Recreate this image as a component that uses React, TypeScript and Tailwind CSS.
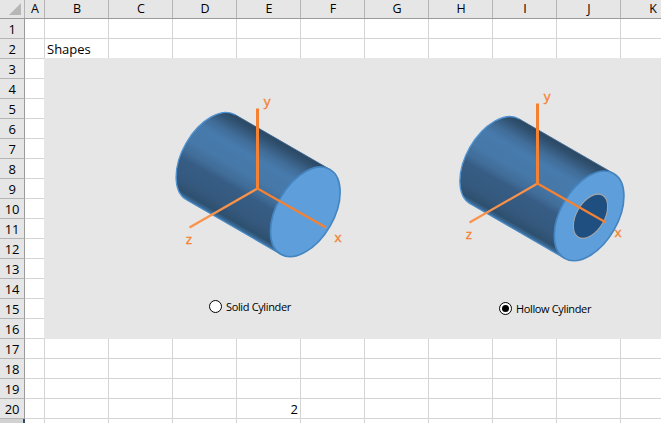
import { useState } from "react";
import clsx from "clsx";

type Shape = "solid" | "hollow";

const COLUMNS = ["A", "B", "C", "D", "E", "F", "G", "H", "I", "J", "K"];
const ROWS = Array.from({ length: 21 }, (_, i) => i + 1);

function columnWidth(column: string) {
  return column === "A" ? "w-5" : "w-16";
}

function ColumnHeaders() {
  return (
    <div className="flex h-[19px] border-b border-[#9b9b9b] bg-[#e6e6e6]">
      <div className="flex w-[25px] shrink-0 justify-end border-r border-[#b5b5b5] pt-[3px] pr-[3px]">
        <svg className="h-3 w-3" viewBox="0 0 12 12">
          <path d="M12 0V12H0Z" fill="#b7b7b7" />
        </svg>
      </div>
      {COLUMNS.map((column) => (
        <div
          key={column}
          className={clsx(
            "shrink-0 border-r border-[#b5b5b5] pl-px text-center text-[12.5px] leading-[17px]",
            columnWidth(column)
          )}
        >
          {column}
        </div>
      ))}
    </div>
  );
}

function Row({ row, cells }: { row: number; cells: Record<string, string> }) {
  return (
    <div className="flex h-5 leading-5">
      <div
        className={clsx(
          "w-[25px] shrink-0 border-b text-center tracking-[-0.3px]",
          row === 21
            ? "border-r-2 border-b-[#b5b5b5] border-r-[#2f4d6b] bg-[#d2d2d2]"
            : "border-r border-r-[#9b9b9b] border-b-[#b5b5b5] bg-[#e6e6e6]"
        )}
      >
        {row === 21 ? null : row}
      </div>
      {COLUMNS.map((column) => {
        const value = cells[`${column}${row}`] ?? "";
        const isNumber = value !== "" && !Number.isNaN(Number(value));
        return (
          <div
            key={column}
            className={clsx(
              "shrink-0 border-r border-b border-[#d4d4d4] px-0.5",
              columnWidth(column),
              isNumber && "text-right"
            )}
          >
            {value}
          </div>
        );
      })}
    </div>
  );
}

function Cylinder({ kind }: { kind: Shape }) {
  const hollow = kind === "hollow";
  const shade = `shade-${kind}`;

  return (
    <svg className="h-[180px] w-[200px]" viewBox="0 0 200 180">
      <defs>
        <linearGradient id={shade} gradientUnits="userSpaceOnUse" x1="0" y1="-49" x2="0" y2="49">
          <stop offset="0" stopColor="#2b4862" />
          <stop offset="0.05" stopColor="#2f4f6d" />
          <stop offset="0.18" stopColor="#416d99" />
          <stop offset="0.28" stopColor="#477bad" />
          <stop offset="0.46" stopColor="#4678a8" />
          <stop offset="0.58" stopColor="#406c98" />
          <stop offset="0.65" stopColor="#375d85" />
          <stop offset="0.84" stopColor="#35597e" />
          <stop offset="0.95" stopColor="#2e506f" />
          <stop offset="1" stopColor="#3f75a8" />
        </linearGradient>
      </defs>

      <g transform={hollow ? "translate(49.7 76.4) rotate(30)" : "translate(50.9 67.3) rotate(30)"}>
        <path d="M109 -49H0A28.6 49 0 0 0 0 49H109Z" fill={`url(#${shade})`} />
        <path d="M0 -49A28.6 49 0 0 0 0 49" fill="none" stroke="#5093d3" strokeWidth="1.3" />
        <path d="M0 49H109" stroke="#4a88c2" strokeWidth="1.2" />
        <path d="M0 -49H109" stroke="#3e6b95" strokeWidth="0.8" />
        <ellipse cx="109" rx="28.6" ry="49" fill="#5d9edb" stroke="#4484bf" strokeWidth="1.6" />
        {hollow && (
          <ellipse
            cx="110.4"
            cy="-0.4"
            rx="14"
            ry="24.2"
            fill="#1f4f80"
            stroke="#a5a5a5"
            strokeWidth="1.1"
          />
        )}
      </g>

      <g transform={hollow ? "translate(92.5 98.5)" : "translate(97.5 98.5)"}>
        <path d="M0 0L-68 39" stroke="#f9924a" strokeWidth="2.2" />
        <path d="M0 0L68.5 39" stroke="#f58233" strokeWidth="2.2" />
        <path d="M0 1V-80" stroke="#f58233" strokeWidth="3" />
        <g fill="#f58233" stroke="#f58233" strokeWidth="0.35" fontSize="13.5" textAnchor="middle">
          <text x="9.7" y="-83">y</text>
          <text x="-68.5" y="55.5">z</text>
          <text x="80.5" y="53.5">x</text>
        </g>
      </g>
    </svg>
  );
}

function RadioOption({
  label,
  checked,
  onSelect,
  className,
}: {
  label: string;
  checked: boolean;
  onSelect: () => void;
  className: string;
}) {
  return (
    <button
      type="button"
      role="radio"
      aria-checked={checked}
      onClick={onSelect}
      className={clsx(
        "flex items-center gap-1 text-[11px] leading-[13px] tracking-[-0.36px] whitespace-nowrap",
        className
      )}
    >
      <span className="flex h-[13px] w-[13px] items-center justify-center rounded-full border border-black bg-white">
        {checked && <span className="h-[7px] w-[7px] rounded-full bg-black" />}
      </span>
      {label}
    </button>
  );
}

export default function App() {
  const [shape, setShape] = useState<Shape>("hollow");
  const cells = { B2: "Shapes", E20: shape === "hollow" ? "2" : "1" };

  return (
    <div className="relative h-[423px] w-[661px] overflow-hidden bg-white font-['Open_Sans','Noto_Sans',sans-serif] text-[13px] text-black">
      <ColumnHeaders />
      {ROWS.map((row) => (
        <Row key={row} row={row} cells={cells} />
      ))}

      {/* drawing object floating over B3:K16 */}
      <div
        role="radiogroup"
        className="absolute top-[58px] left-11 flex h-[281px] w-[617px] items-start bg-[#e6e6e6]"
      >
        <div className="mt-8 ml-[116px]">
          <Cylinder kind="solid" />
          <RadioOption
            label="Solid Cylinder"
            checked={shape === "solid"}
            onSelect={() => setShape("solid")}
            className="mt-[30px] ml-[49px]"
          />
        </div>
        <div className="mt-[27px] ml-[85px]">
          <Cylinder kind="hollow" />
          <RadioOption
            label="Hollow Cylinder"
            checked={shape === "hollow"}
            onSelect={() => setShape("hollow")}
            className="mt-[37px] ml-[54px]"
          />
        </div>
      </div>
    </div>
  );
}
